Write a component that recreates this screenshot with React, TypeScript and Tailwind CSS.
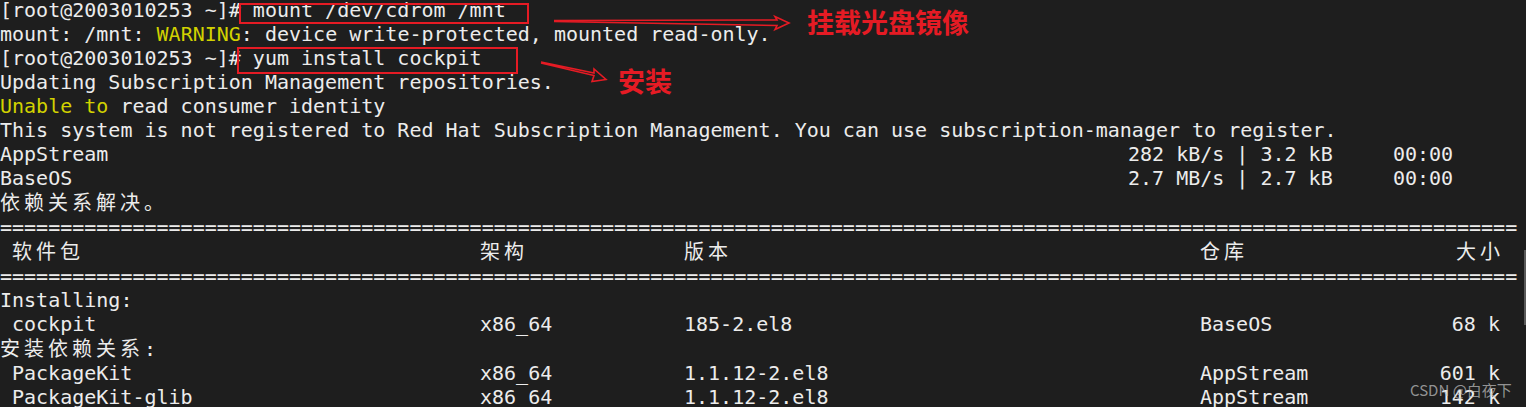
const mono = "font-['DejaVu_Sans_Mono','Liberation_Mono',monospace]";
const cjk = "font-['Noto_Sans_CJK_SC',sans-serif] tracking-[4px]";

const rule = "=".repeat(126);

function Cjk({ children }: { children: string }) {
  return <span className={cjk}>{children}</span>;
}

function TableRow({ cells }: { cells: React.ReactNode[] }) {
  return (
    <div className="grid grid-cols-[480px_204px_516px_180px_120px] whitespace-pre">
      <div className="pl-[12px]">{cells[0]}</div>
      <div>{cells[1]}</div>
      <div>{cells[2]}</div>
      <div>{cells[3]}</div>
      <div className="text-right">{cells[4]}</div>
    </div>
  );
}

function RepoRow({ name, speed, size }: { name: string; speed: string; size: string }) {
  return (
    <div className="grid grid-cols-[1128px_1fr] whitespace-pre">
      <div>{name}</div>
      <div>{`${speed} | ${size}     00:00`}</div>
    </div>
  );
}

export default function App() {
  return (
    <div className={`relative w-[1526px] h-[407px] overflow-hidden bg-[#1e1e1e] text-[#ececec] text-[20px] leading-[24px] ${mono}`}>
      <div className="flex flex-col -mt-[2px]">
        <div className="whitespace-pre">[root@2003010253 ~]# mount /dev/cdrom /mnt</div>
        <div className="whitespace-pre">
          mount: /mnt: <span className="text-[#d2d200]">WARNING</span>: device write-protected, mounted read-only.
        </div>
        <div className="whitespace-pre">[root@2003010253 ~]# yum install cockpit</div>
        <div className="whitespace-pre">Updating Subscription Management repositories.</div>
        <div className="whitespace-pre">
          <span className="text-[#d2d200]">Unable to</span> read consumer identity
        </div>
        <div className="whitespace-pre">
          This system is not registered to Red Hat Subscription Management. You can use subscription-manager to register.
        </div>
        <RepoRow name="AppStream" speed="282 kB/s" size="3.2 kB" />
        <RepoRow name="BaseOS" speed="2.7 MB/s" size="2.7 kB" />
        <div><Cjk>依赖关系解决。</Cjk></div>
        <div className="whitespace-pre">{rule}</div>
        <TableRow
          cells={[
            <Cjk>软件包</Cjk>,
            <Cjk>架构</Cjk>,
            <Cjk>版本</Cjk>,
            <Cjk>仓库</Cjk>,
            <span className={`${cjk} mr-[-4px]`}>大小</span>,
          ]}
        />
        <div className="whitespace-pre">{rule}</div>
        <div className="whitespace-pre">Installing:</div>
        <TableRow cells={["cockpit", "x86_64", "185-2.el8", "BaseOS", "68 k"]} />
        <div><Cjk>安装依赖关系</Cjk>:</div>
        <TableRow cells={["PackageKit", "x86_64", "1.1.12-2.el8", "AppStream", "601 k"]} />
        <TableRow cells={["PackageKit-glib", "x86_64", "1.1.12-2.el8", "AppStream", "142 k"]} />
      </div>

      {/* annotations */}
      <div className="absolute left-[239px] top-[3px] w-[290px] h-[21px] border-2 border-[#e51b24]" />
      <div className="absolute left-[237px] top-[47px] w-[281px] h-[27px] border-2 border-[#e51b24]" />

      <svg className="absolute left-0 top-0" width="1526" height="407" fill="none">
        <path
          d="M554 20.5 L777 20 L775 16.5 L789 23 L775 29.5 L777 25.5 L554 21.5"
          stroke="#e51b24"
          strokeWidth="1.6"
          strokeLinejoin="miter"
        />
        <path
          d="M541 62 L594 73 L594 69 L606 79.5 L592 81.5 L594 75.5 L541 63"
          stroke="#e51b24"
          strokeWidth="1.6"
          strokeLinejoin="miter"
        />
      </svg>

      <div className="absolute left-[807px] top-[7px] text-[27px] leading-[30px] font-bold text-[#e51b24] font-['Noto_Sans_CJK_SC',sans-serif]">
        挂载光盘镜像
      </div>
      <div className="absolute left-[618px] top-[66px] text-[27px] leading-[30px] font-bold text-[#e51b24] font-['Noto_Sans_CJK_SC',sans-serif]">
        安装
      </div>

      {/* scrollbar thumb */}
      <div className="absolute right-0 top-[250px] w-[2px] h-[75px] bg-[#5a5a5a]" />

      <div className="absolute left-[1410px] top-[381px] text-[15px] leading-[18px] text-[#c8c8c8]/70 font-['Noto_Sans_CJK_SC',sans-serif]">
        CSDN @白夜下
      </div>
    </div>
  );
}
